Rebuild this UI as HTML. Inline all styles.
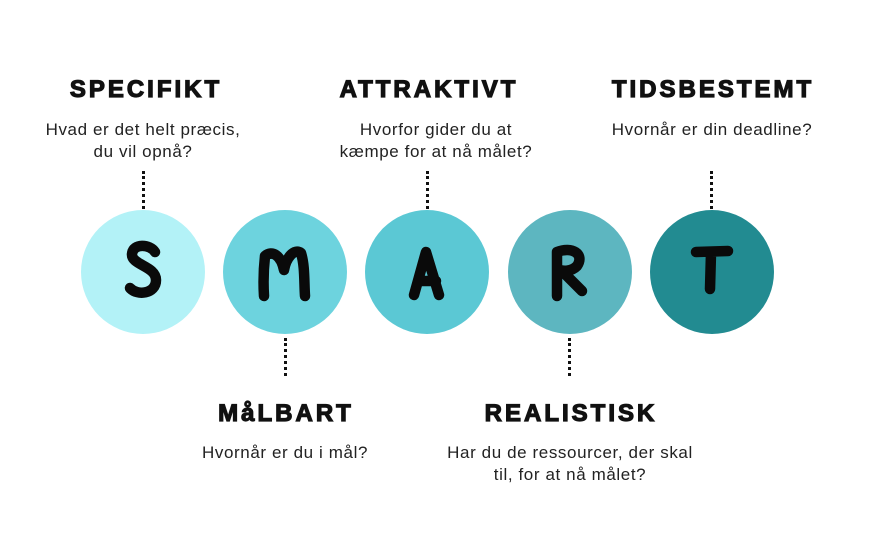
<!DOCTYPE html>
<html><head><meta charset="utf-8"><style>
body{margin:0;width:889px;height:542px;background:#fff;position:relative;overflow:hidden;font-family:"Liberation Sans",sans-serif}
.h{position:absolute;transform:translateX(-50%);white-space:nowrap;font-weight:bold;font-size:24px;letter-spacing:3px;color:#111;-webkit-text-stroke:1.2px #111}
.t{position:absolute;transform:translateX(-50%);text-align:center;white-space:nowrap;font-size:17px;letter-spacing:0.6px;line-height:22px;color:#222}
.d{position:absolute;width:3px;border-left:3px dotted #111;height:38px}
</style></head><body>
<div class="h" style="left:146px;top:76px">SPECIFIKT</div>
<div class="t" style="left:143px;top:119px">Hvad er det helt præcis,<br>du vil opnå?</div>
<div class="h" style="left:429px;top:76px">ATTRAKTIVT</div>
<div class="t" style="left:436px;top:119px">Hvorfor gider du at<br>kæmpe for at nå målet?</div>
<div class="h" style="left:713px;top:76px">TIDSBESTEMT</div>
<div class="t" style="left:712px;top:119px">Hvornår er din deadline?</div>
<div class="h" style="left:286px;top:400px">MåLBART</div>
<div class="t" style="left:285px;top:442px">Hvornår er du i mål?</div>
<div class="h" style="left:571px;top:400px">REALISTISK</div>
<div class="t" style="left:570px;top:442px">Har du de ressourcer, der skal<br>til, for at nå målet?</div>
<div class="d" style="left:142px;top:171px"></div>
<div class="d" style="left:426px;top:171px"></div>
<div class="d" style="left:710px;top:171px"></div>
<div class="d" style="left:284px;top:338px"></div>
<div class="d" style="left:568px;top:338px"></div>
<svg width="889" height="542" style="position:absolute;left:0;top:0">
<circle cx="143" cy="272" r="62" fill="#b3f2f7"/>
<circle cx="285" cy="272" r="62" fill="#6dd3de"/>
<circle cx="427" cy="272" r="62" fill="#5bc8d4"/>
<circle cx="570" cy="272" r="62" fill="#5db6c0"/>
<circle cx="712" cy="272" r="62" fill="#228b91"/>
<g fill="none" stroke="#0a0a0a" stroke-width="10.5" stroke-linecap="round" stroke-linejoin="round">
<path d="M155 252 C150 244 133 243 132 254 C131 265 156 266 156 280 C156 294 137 296 130 288"/>
<path d="M264 296 C263 280 264 265 265 256 C272 250 281 255 284 270 C286 258 294 248 301 253 C305 266 304 282 305 296"/>
<path d="M414 295 L426 252 L439 295 M418 281 L436 281"/>
<path d="M557 296 L557 252 C572 246 585 254 577 266 C571 272 563 271 560 270 M566 275 L582 291"/>
<path d="M696 252 L728 251 M711 253 L710 289"/>
</g>
</svg>
</body></html>
